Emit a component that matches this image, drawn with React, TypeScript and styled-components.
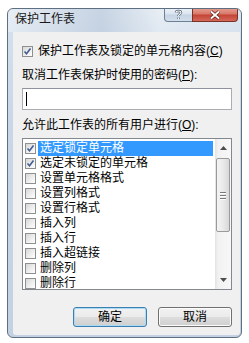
import React from "react";
import styled, { createGlobalStyle } from "styled-components";

const Global = createGlobalStyle`
  html, body { margin: 0; padding: 0; background: #ffffff; }
  body { font-family: "Liberation Sans", "Noto Sans CJK SC", sans-serif; font-size: 12px; color: #000; }
`;

const Window = styled.div`
  margin: 8px 0 0 7px;
  width: 235px;
  height: 330px;
  box-sizing: border-box;
  border: 1px solid #5f6f82;
  border-radius: 6px;
  background: linear-gradient(180deg, #dde6f0 0px, #d3dfec 24px, #c8d6e6 120px, #c3d2e3 100%);
  display: flex;
  flex-direction: column;
  overflow: hidden;
`;

const TitleBar = styled.div`
  height: 23px;
  display: flex;
  align-items: flex-start;
  justify-content: space-between;
  padding-left: 7px;
  padding-right: 3px;
  background: linear-gradient(90deg, rgba(255,255,255,0.35), rgba(185,200,218,0.6) 40%, rgba(255,255,255,0.3) 65%, rgba(220,230,240,0.4));
`;

const Title = styled.div`
  padding-top: 3px;
  line-height: 15px;
  font-size: 12px;
  color: #1a1a1a;
`;

const Controls = styled.div`
  display: flex;
  margin-top: -1px;
`;

const CapBtn = styled.div<{ $w: number; $close?: boolean }>`
  width: ${(p) => p.$w}px;
  height: 14px;
  box-sizing: border-box;
  display: flex;
  align-items: center;
  justify-content: center;
  border: 1px solid ${(p) => (p.$close ? "#7a3128" : "#6f8096")};
  border-top: none;
  background: ${(p) =>
    p.$close
      ? "linear-gradient(180deg, #e6a294 0%, #d8796b 45%, #c44536 55%, #d4685a 100%)"
      : "linear-gradient(180deg, #eef3f9 0%, #dbe4ef 45%, #c5d3e4 55%, #d3dfec 100%)"};
  border-radius: ${(p) => (p.$close ? "0 0 4px 0" : "0 0 0 4px")};
  ${(p) => (p.$close ? "margin-left: -1px;" : "")}
`;

const Body = styled.div`
  flex: 1;
  padding: 0 1px 2px 5px;
  display: flex;
`;

const Client = styled.div`
  flex: 1;
  background: #f0f0f0;
  box-sizing: border-box;
  padding: 12px 8px 8px 9px;
  display: flex;
  flex-direction: column;
  border-radius: 0 0 3px 3px;
`;

const CheckRow = styled.div`
  display: flex;
  align-items: center;
  height: 15px;
  gap: 5px;
  line-height: 15px;
`;

const BoxWrap = styled.span`
  width: 11px;
  height: 11px;
  flex: none;
  box-sizing: border-box;
  border: 1px solid #8e8f8f;
  background: linear-gradient(135deg, #d7d7d7 0%, #eeeeee 55%, #ffffff 100%);
  display: flex;
  align-items: center;
  justify-content: center;
`;

const Label = styled.div<{ $mt: number }>`
  margin-top: ${(p) => p.$mt}px;
  line-height: 15px;
  height: 15px;
  white-space: nowrap;
`;

const U = styled.span`
  text-decoration: underline;
  text-underline-offset: 1px;
`;

const Input = styled.div`
  margin-top: 5px;
  height: 22px;
  box-sizing: border-box;
  border: 1px solid #abadb3;
  border-top-color: #8e939e;
  background: #ffffff;
  display: flex;
  align-items: center;
  padding-left: 3px;
`;

const Caret = styled.span`
  width: 1px;
  height: 14px;
  background: #000;
`;

const ListBox = styled.div`
  margin-top: 5px;
  height: 152px;
  box-sizing: border-box;
  border: 1px solid #828790;
  background: #ffffff;
  display: flex;
`;

const Items = styled.div`
  flex: 1;
  padding: 2px 2px 0 2px;
  display: flex;
  flex-direction: column;
`;

const ItemRow = styled.div`
  height: 15px;
  flex: none;
  display: flex;
  align-items: center;
  gap: 2px;
`;

const ItemText = styled.span<{ $sel?: boolean }>`
  flex: 1;
  height: 15px;
  line-height: 15px;
  padding-left: 2px;
  white-space: nowrap;
  background: ${(p) => (p.$sel ? "#3399ff" : "transparent")};
  color: ${(p) => (p.$sel ? "#ffffff" : "#000000")};
`;

const ScrollBar = styled.div`
  width: 16px;
  flex: none;
  display: flex;
  flex-direction: column;
  background: linear-gradient(90deg, #e3e3e3 0%, #f2f2f2 20%, #f7f7f7 100%);
  padding: 0 1px 0 1px;
  box-sizing: border-box;
`;

const ArrowBtn = styled.div`
  height: 18px;
  flex: none;
  display: flex;
  align-items: center;
  justify-content: center;
`;

const Track = styled.div`
  flex: 1;
  padding-top: 1px;
  display: flex;
  flex-direction: column;
`;

const Thumb = styled.div`
  height: 74px;
  box-sizing: border-box;
  border: 1px solid #9a9a9a;
  border-radius: 2px;
  background: linear-gradient(90deg, #f4f4f4 0%, #eaeaea 50%, #d8d8d8 100%);
  display: flex;
  flex-direction: column;
  align-items: center;
  justify-content: center;
  gap: 2px;
`;

const Grip = styled.span`
  width: 6px;
  height: 1px;
  background: #7a7a7a;
  box-shadow: 0 1px 0 #ffffff;
`;

const Buttons = styled.div`
  margin-top: 17px;
  display: flex;
  justify-content: flex-end;
  gap: 11px;
`;

const Button = styled.div<{ $default?: boolean }>`
  width: 74px;
  height: 20px;
  box-sizing: border-box;
  border: 1px solid ${(p) => (p.$default ? "#3c7fb1" : "#707070")};
  border-radius: 3px;
  background: linear-gradient(180deg, #f2f2f2 0%, #ebebeb 48%, #dddddd 52%, #cfcfcf 100%);
  box-shadow: ${(p) => (p.$default ? "inset 0 0 0 1px #a9dcf4" : "inset 0 0 0 1px #fcfcfc")};
  display: flex;
  align-items: center;
  justify-content: center;
  line-height: 15px;
`;

const Check = ({ on }: { on?: boolean }) => (
  <BoxWrap>
    {on && (
      <svg width="9" height="9" viewBox="0 0 9 9">
        <path d="M1.5 4.5 L3.5 6.8 L7.5 1.5" fill="none" stroke="#445d92" strokeWidth="1.6" />
      </svg>
    )}
  </BoxWrap>
);

const items: { t: string; on?: boolean; sel?: boolean }[] = [
  { t: "选定锁定单元格", on: true, sel: true },
  { t: "选定未锁定的单元格", on: true },
  { t: "设置单元格格式" },
  { t: "设置列格式" },
  { t: "设置行格式" },
  { t: "插入列" },
  { t: "插入行" },
  { t: "插入超链接" },
  { t: "删除列" },
  { t: "删除行" },
];

export default function App() {
  return (
    <>
      <Global />
      <Window>
        <TitleBar>
          <Title>保护工作表</Title>
          <Controls>
            <CapBtn $w={29}>
              <svg width="9" height="11" viewBox="0 0 9 11">
                <path
                  d="M2 3.5 C2 1.5 7 1.5 7 3.5 C7 5 4.5 5 4.5 7 M4.5 8.5 L4.5 10"
                  fill="none"
                  stroke="#4e5e72"
                  strokeWidth="2.4"
                />
                <path
                  d="M2 3.5 C2 1.5 7 1.5 7 3.5 C7 5 4.5 5 4.5 7 M4.5 8.5 L4.5 10"
                  fill="none"
                  stroke="#ffffff"
                  strokeWidth="1.1"
                />
              </svg>
            </CapBtn>
            <CapBtn $w={46} $close>
              <svg width="12" height="10" viewBox="0 0 12 10">
                <path d="M2 1.5 L10 8.5 M10 1.5 L2 8.5" stroke="#5a1e18" strokeWidth="3.2" />
                <path d="M2 1.5 L10 8.5 M10 1.5 L2 8.5" stroke="#ffffff" strokeWidth="1.8" />
              </svg>
            </CapBtn>
          </Controls>
        </TitleBar>
        <Body>
          <Client>
            <CheckRow>
              <Check on />
              <span>
                保护工作表及锁定的单元格内容(<U>C</U>)
              </span>
            </CheckRow>
            <Label $mt={9}>
              取消工作表保护时使用的密码(<U>P</U>):
            </Label>
            <Input>
              <Caret />
            </Input>
            <Label $mt={8}>
              允许此工作表的所有用户进行(<U>O</U>):
            </Label>
            <ListBox>
              <Items>
                {items.map((it) => (
                  <ItemRow key={it.t}>
                    <Check on={it.on} />
                    <ItemText $sel={it.sel}>{it.t}</ItemText>
                  </ItemRow>
                ))}
              </Items>
              <ScrollBar>
                <ArrowBtn>
                  <svg width="7" height="4" viewBox="0 0 7 4">
                    <path d="M0 4 L3.5 0 L7 4 Z" fill="#4d4d4d" />
                  </svg>
                </ArrowBtn>
                <Track>
                  <Thumb>
                    <Grip />
                    <Grip />
                    <Grip />
                  </Thumb>
                </Track>
                <ArrowBtn>
                  <svg width="7" height="4" viewBox="0 0 7 4">
                    <path d="M0 0 L7 0 L3.5 4 Z" fill="#4d4d4d" />
                  </svg>
                </ArrowBtn>
              </ScrollBar>
            </ListBox>
            <Buttons>
              <Button $default>确定</Button>
              <Button>取消</Button>
            </Buttons>
          </Client>
        </Body>
      </Window>
    </>
  );
}
